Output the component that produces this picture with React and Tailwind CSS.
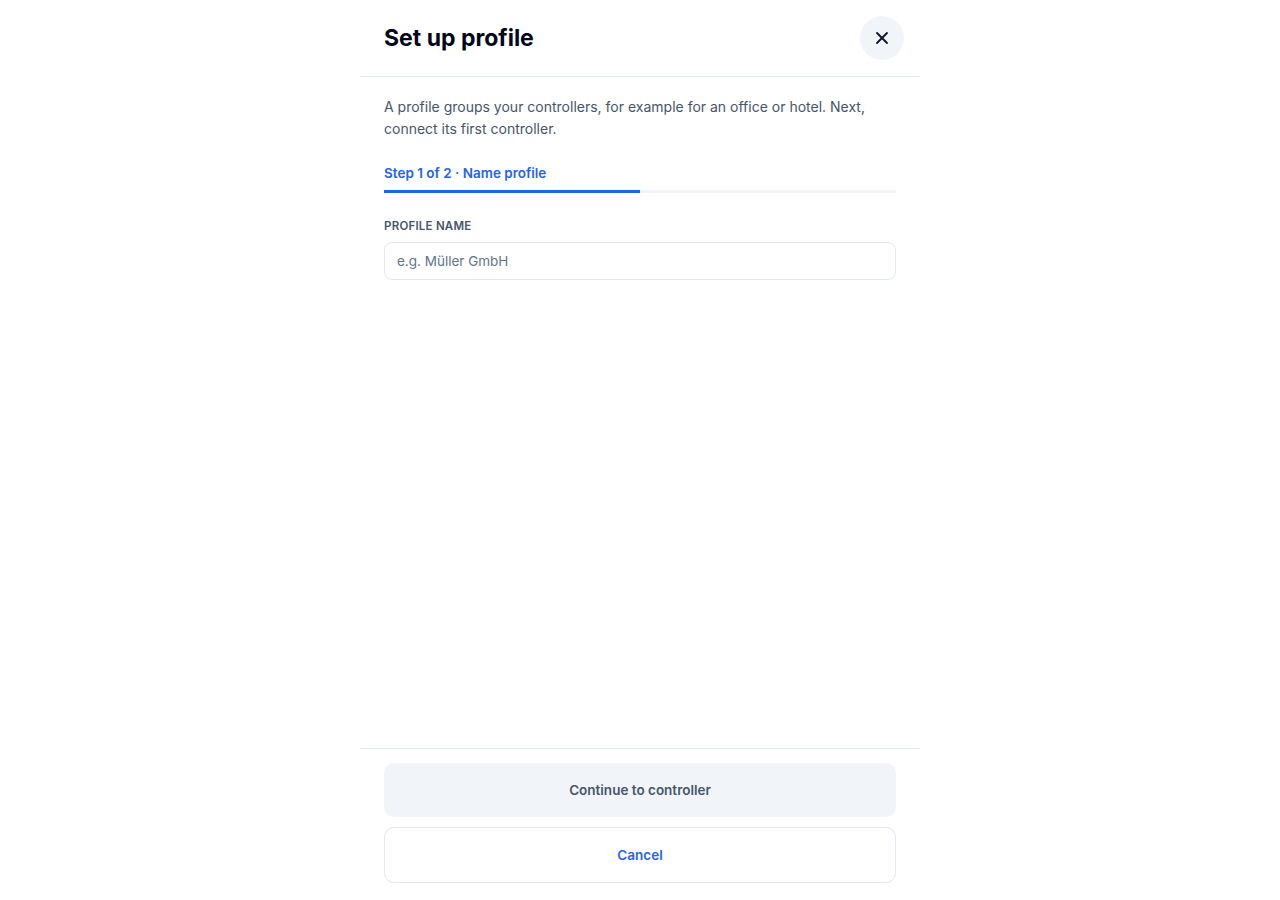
import { X } from "lucide-react";

export default function App() {
  return (
    <div className="min-h-screen bg-white font-['Inter',sans-serif]">
      <div className="mx-auto flex h-[900px] w-[560px] flex-col bg-white">
        <header className="flex h-[77px] items-center justify-between border-b border-slate-200 pl-6 pr-4">
          <h1 className="text-[23px] font-bold text-slate-950">
            Set up profile
          </h1>
          <button
            type="button"
            aria-label="Close"
            className="grid size-11 place-items-center rounded-full bg-slate-100 text-slate-900"
          >
            <X className="size-5" strokeWidth={2.25} />
          </button>
        </header>

        <div className="flex-1 px-6 pt-[19px]">
          <p className="text-[14px] leading-[22px] text-slate-600">
            A profile groups your controllers, for example for an office or hotel. Next,
            connect its first controller.
          </p>

          <div className="mt-[23px]">
            <p className="text-[13.5px] font-semibold leading-5 text-[#2563eb]">
              Step 1 of 2 · Name profile
            </p>
            <div className="mt-[7px] flex h-[3px] w-full bg-slate-100">
              <div className="h-full w-1/2 bg-[#2563eb]" />
            </div>
          </div>

          <label className="mt-[25px] block">
            <span className="block text-[11.5px] font-semibold uppercase leading-4 tracking-[0.02em] text-slate-600">
              Profile name
            </span>
            <input
              type="text"
              placeholder="e.g. Müller GmbH"
              className="mt-2 h-[38px] w-full rounded-lg border border-slate-200 px-3 text-[13.5px] text-slate-900 outline-none placeholder:text-slate-500"
            />
          </label>
        </div>

        <footer className="flex flex-col gap-2.5 border-t border-slate-200 px-6 pb-[17px] pt-3.5">
          <button
            type="button"
            className="h-[54px] rounded-[10px] bg-slate-100 text-[13.5px] font-semibold text-slate-600"
          >
            Continue to controller
          </button>
          <button
            type="button"
            className="h-[56px] rounded-[10px] border border-slate-200 bg-white text-[13.5px] font-semibold text-[#2563eb]"
          >
            Cancel
          </button>
        </footer>
      </div>
    </div>
  );
}
